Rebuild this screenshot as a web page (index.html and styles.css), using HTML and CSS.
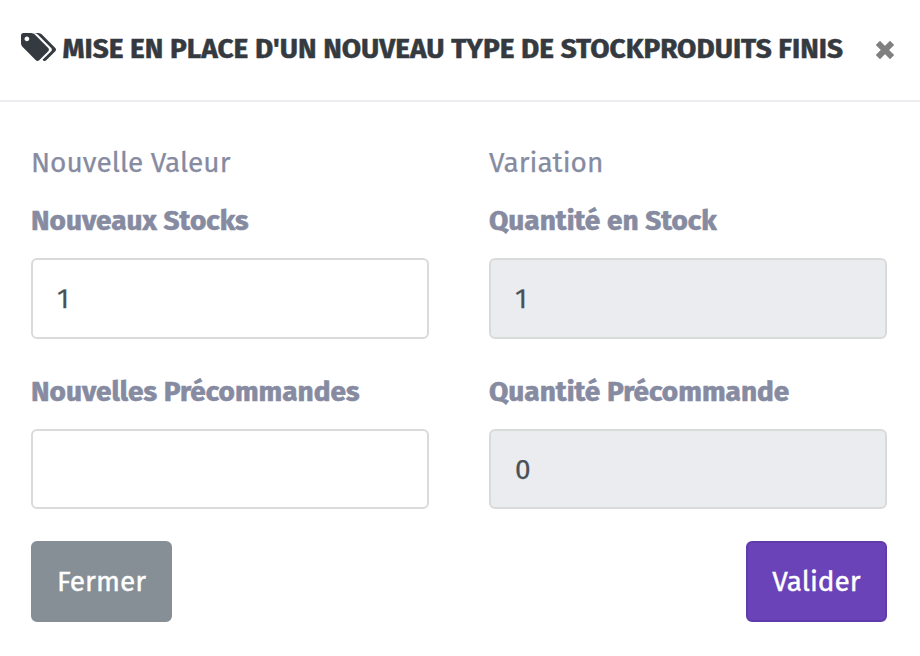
FILE: index.html
```html
<!DOCTYPE html>
<html lang="fr">
<head>
<meta charset="UTF-8">
<meta name="viewport" content="width=device-width, initial-scale=1.0">
<title>Nouveau type de stock</title>
<link rel="stylesheet" href="styles.css">
</head>
<body>
<div class="modal">
    <div class="modal-header">
        <svg class="icon-tags" viewBox="0 128 1899 1515">
            <path d="M448 448q0-53-37.5-90.5t-90.5-37.5-90.5 37.5-37.500 90.500 37.500 90.500 90.500 37.500 90.500-37.500 37.500-90.500zm1067 576q0 53-37 90l-491 492q-39 37-91 37-53 0-90-37l-715-716q-38-37-64.500-101t-26.500-117v-416q0-52 38-90t90-38h416q53 0 117 26.500t102 64.500l715 714q37 39 37 91zm384 0q0 53-37 90l-491 492q-39 37-91 37-36 0-59-14t-53-45l470-470q37-37 37-90 0-52-37-91l-715-714q-38-38-102-64.500t-117-26.500h224q53 0 117 26.500t102 64.500l715 714q37 39 37 91z"/>
        </svg>
        <h5 class="modal-title">MISE EN PLACE D'UN NOUVEAU TYPE DE STOCKPRODUITS FINIS</h5>
        <button type="button" class="close" aria-label="Fermer">
            <svg class="icon-close" viewBox="0 0 18 18">
                <path d="M4 4L14 14M14 4L4 14"/>
            </svg>
        </button>
    </div>
    <form class="modal-body">
        <div class="row">
            <div class="col">
                <p class="subtitle">Nouvelle Valeur</p>
                <div class="form-group">
                    <label for="new-stock">Nouveaux Stocks</label>
                    <input type="text" id="new-stock" value="1">
                </div>
                <div class="form-group">
                    <label for="new-order">Nouvelles Précommandes</label>
                    <input type="text" id="new-order">
                </div>
            </div>
            <div class="col">
                <p class="subtitle">Variation</p>
                <div class="form-group">
                    <label for="stock-qty">Quantité en Stock</label>
                    <input type="text" id="stock-qty" value="1" readonly>
                </div>
                <div class="form-group">
                    <label for="order-qty">Quantité Précommande</label>
                    <input type="text" id="order-qty" value="0" readonly>
                </div>
            </div>
        </div>
        <div class="actions">
            <button type="button" class="btn btn-secondary">Fermer</button>
            <button type="button" class="btn btn-primary">Valider</button>
        </div>
    </form>
</div>
</body>
</html>
```
FILE: styles.css
```css
* {
    box-sizing: border-box;
}

body {
    margin: 0;
    background-color: #fff;
    font-family: "Fira Sans", "Noto Sans", sans-serif;
    font-size: 28px;
    color: #868ba1;
    -webkit-text-stroke: 0.25px;
}

.modal-header {
    display: flex;
    align-items: flex-start;
    height: 102px;
    padding: 32px 26px 0 21px;
    border-bottom: 2px solid #ebebf0;
}

.icon-tags {
    flex: none;
    width: 35px;
    height: 28px;
    margin-top: 1px;
    fill: #343a40;
}

.modal-title {
    flex: 1;
    margin: 0 0 0 6.5px;
    font-size: 28px;
    line-height: 34px;
    font-weight: 700;
    white-space: nowrap;
    color: #343a40;
    -webkit-text-stroke: 0.5px;
}

.close {
    flex: none;
    width: 18px;
    height: 18px;
    margin-top: 9px;
    padding: 0;
    border: none;
    background: none;
}

.icon-close {
    display: block;
    stroke: #808080;
    stroke-width: 6;
    stroke-linecap: square;
}

.modal-body {
    padding: 40px 33px 0 31px;
}

.row {
    display: grid;
    grid-template-columns: 1fr 1fr;
    column-gap: 60px;
}

.subtitle {
    margin: 0 0 16px;
    line-height: 42px;
}

label {
    display: block;
    height: 42px;
    margin-bottom: 16px;
    line-height: 42px;
    font-weight: 700;
    white-space: nowrap;
    -webkit-text-stroke: 0.6px;
}

.form-group {
    height: 171px;
}

.form-group:last-child {
    height: 170px;
}

input {
    display: block;
    width: 100%;
    height: 81px;
    padding: 0 24px;
    border: 2px solid #d9dada;
    border-radius: 6px;
    outline: none;
    font-family: inherit;
    font-size: 28px;
    color: #495057;
    background-color: #fff;
}

.form-group:last-child input {
    height: 80px;
}

input[readonly] {
    background-color: #ebecf0;
}

.actions {
    display: flex;
    justify-content: space-between;
}

.btn {
    width: 141px;
    height: 81px;
    padding: 0;
    border: 2px solid #868e96;
    border-radius: 6px;
    font-family: inherit;
    font-size: 28px;
    color: #fff;
    -webkit-text-stroke: 0.4px;
}

.btn-secondary {
    background-color: #868e96;
}

.btn-primary {
    background-color: #6a43b9;
    border-color: #603bab;
}
```
